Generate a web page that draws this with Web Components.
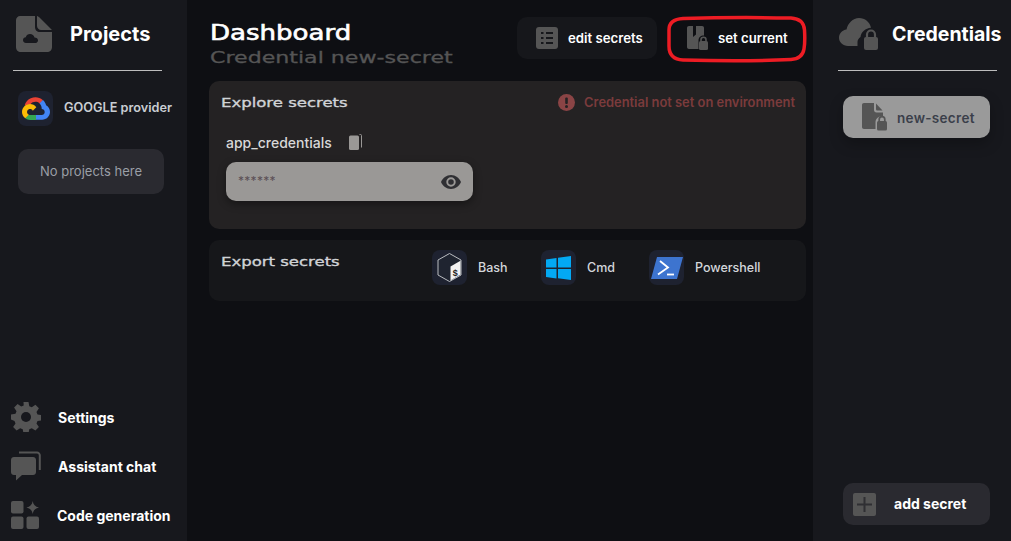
<!DOCTYPE html>
<html lang="en">
<head>
<meta charset="utf-8">
<title>Dashboard</title>
<style>
  html, body { margin: 0; height: 100%; background: #0e0f13; }
  body { font-family: Inter, "Liberation Sans", sans-serif; overflow: hidden; }
</style>
</head>
<body>
<app-shell>
  <projects-panel slot="left"></projects-panel>
  <dash-board slot="main"></dash-board>
  <credentials-panel slot="right"></credentials-panel>
</app-shell>

<script>
const icons = {
  project: `<svg viewBox="0 0 36 36" width="36" height="36"><path fill="#555" d="M4 0h15v11c0 3 2 5 5 5h12v15c0 3-2 5-5 5H5c-3 0-5-2-5-5V4c0-2 2-4 4-4z"/><path fill="#555" d="M21 0c1 0 2 1 3 2l10 10c1 1 2 2 2 2H25c-2 0-4-2-4-4z"/><path fill="#17181d" d="M10 27c-2 0-3-1.400-3-3 0-1.500 1.200-2.700 2.800-2.800.6-2 2.200-3.200 4.200-3.200 2.200 0 4 1.400 4.500 3.400 2 0 3.500 1.300 3.500 3 0 1.500-1.300 2.600-3 2.600z"/></svg>`,
  gear: `<svg viewBox="0 0 30 30" width="30" height="30"><path fill="#555" d="M12.500 0h5l.8 4.200 2.500 1 3.600-2.400 3.500 3.500-2.400 3.600 1 2.500 4.500.8v5l-4.500.8-1 2.500 2.400 3.600-3.500 3.500-3.600-2.400-2.500 1-.8 4.300h-5l-.8-4.300-2.500-1-3.600 2.400-3.500-3.500 2.400-3.600-1-2.500L0 17.500v-5l4.500-.8 1-2.500-2.400-3.600 3.500-3.500 3.600 2.400 2.500-1z"/><circle cx="15" cy="15" r="5" fill="#17181d"/></svg>`,
  chat: `<svg viewBox="0 0 30 30" width="30" height="30"><path fill="#555" d="M3 6h19c1.700 0 3 1.300 3 3v12c0 1.700-1.300 3-3 3H11l-6 5.500V24H3c-1.700 0-3-1.300-3-3V9c0-1.700 1.300-3 3-3z"/><path fill="none" stroke="#555" stroke-width="2" d="M8 1.500h18c1.500 0 2.800 1.300 2.800 2.800V19"/></svg>`,
  apps: `<svg viewBox="0 0 29 29" width="29" height="29"><rect x="0" y="0" width="12.500" height="12.500" rx="2" fill="#555"/><rect x="0" y="15.500" width="12.500" height="12.500" rx="2" fill="#555"/><rect x="15.500" y="15.500" width="12.500" height="12.500" rx="2" fill="#555"/><path fill="#555" d="M21.700 0c.5 3.600 2.500 5.700 6.300 6.500-3.800.8-5.800 2.900-6.300 6.500-.5-3.600-2.500-5.700-6.300-6.500 3.800-.8 5.800-2.900 6.300-6.500z"/></svg>`,
  list: `<svg viewBox="0 0 22 22" width="22" height="22"><rect width="22" height="22" rx="3" fill="#555"/><path stroke="#16171b" stroke-width="2" d="M5 6h2.500M10 6h7M5 11h2.500M10 11h7M5 16h2.500M10 16h7"/></svg>`,
  bookmarkLock: `<svg viewBox="0 0 21 24" width="21" height="24"><path fill="#555" d="M2 0h4v11l3-2.500V0h6c1.300 0 2 .8 2 2v7.500c-3.500 0-5.500 2-5.500 5V23H2c-1.200 0-2-.8-2-2V2C0 .8.800 0 2 0z"/><rect x="12" y="15" width="9" height="9" rx="1.500" fill="#555"/><path fill="none" stroke="#555" stroke-width="1.600" d="M14 15.500v-1.800a2.500 2.500 0 0 1 5 0v1.800"/></svg>`,
  cloudLock: `<svg viewBox="0 0 40 33" width="40" height="33"><path fill="#555" d="M9 28c-5 0-9-3.600-9-8.200 0-4.300 3.200-7.700 7.500-8.300C8.800 5.300 13.800 0 20 0c6 0 10.800 4 12 9.700-5.500.5-10 4.300-10.500 9.300-1.800 1-3 3-3 5v4z"/><rect x="25" y="19" width="14" height="13" rx="2" fill="#555"/><path fill="none" stroke="#555" stroke-width="2.200" d="M28 20v-3.500a4 4 0 0 1 8 0V20"/></svg>`,
  fileLock: `<svg viewBox="0 0 25 28" width="25" height="28"><path fill="#555" d="M2 0h10v7c0 1.500 1 2.500 2.500 2.500H21v3.500c-4.500 0-7.500 2.500-7.500 6.500V26H2c-1.200 0-2-.8-2-2V2C0 .8.800 0 2 0z"/><path fill="#555" d="M14 .5l6.500 7h-5c-1 0-1.500-.5-1.500-1.500z"/><rect x="15" y="18" width="10" height="9.500" rx="1.500" fill="#555"/><path fill="none" stroke="#555" stroke-width="1.700" d="M17.200 18.500v-2a2.800 2.800 0 0 1 5.600 0v2"/></svg>`,
  google: `<svg viewBox="0 0 28 23" width="28" height="23"><path fill="#ea4335" d="M18 6.500l2.500-2.500.2-1.100C16.200-1 9-.5 5 4c-1.100 1.300-1.900 2.800-2.400 4.400l.9-.1 4.700-.8.400-.4C10.600 4.400 14.800 4 17.500 6.200z"/><path fill="#4285f4" d="M24.100 8.300c-.5-2-1.600-3.800-3.200-5.200l-3.400 3.400c1.400 1.200 2.200 2.900 2.200 4.800v.6c1.700 0 3 1.300 3 3s-1.300 3-3 3H14l-.6.600v3.600l.6.600h6c4.300.1 7.900-3.300 8-7.700 0-2.600-1.300-5.100-3.900-6.700z"/><path fill="#34a853" d="M8 22.900h6v-4.900H8c-.4 0-.9-.1-1.300-.3l-.8.3-2.400 2.400-.2.800C4.600 22.200 6.300 22.900 8 22.900z"/><path fill="#fbbc05" d="M8 7.100C3.700 7.100.1 10.700 0 15c0 2.500 1.200 4.900 3.300 6.200l3.500-3.500c-1.500-.7-2.200-2.500-1.500-4s2.500-2.200 4-1.500c.7.300 1.200.8 1.500 1.500l3.500-3.500C12.800 8.200 10.500 7.100 8 7.100z"/></svg>`,
  bash: `<svg viewBox="0 0 35 35" width="35" height="35"><path fill="#1f2430" stroke="#b9bcc0" stroke-width="1" d="M17.500 3.500 29 10v15l-11.500 6.500L6 25V10z"/><path fill="#f2f2f2" d="M18.500 16.500 28.500 10.800v13.800L18.500 30.500z"/><text x="20.500" y="26" font-family="Liberation Mono, monospace" font-size="9" font-weight="700" fill="#222">$</text></svg>`,
  win: `<svg viewBox="0 0 25 24" width="25" height="24"><path fill="#03a9f4" d="M0 3.500 10.500 2v9.500H0zM12 1.800 25 0v11.500H12zM0 13h10.500v9.500L0 21zM12 13h13v11l-13-1.800z"/></svg>`,
  ps: `<svg viewBox="0 0 32 22" width="32" height="22"><path fill="#3d74cf" d="M6 0h26l-6 22H0z"/><path fill="none" stroke="#fff" stroke-width="1.800" d="M9 4l8 6.500-10 7"/><path stroke="#fff" stroke-width="1.800" d="M16 17.500h7"/></svg>`
};

// left column
class ProjectsPanel extends HTMLElement {
  constructor() {
    super();
    this.shadowDOM = this.attachShadow({ mode: 'open' });
  }

  connectedCallback() {
    this.shadowDOM.innerHTML = `
      <style>
        :host { display: flex; flex-direction: column; height: 100%; box-sizing: border-box; background: #17181d; padding: 16px 0 11px; font-family: Inter, sans-serif; }
        .head { display: flex; align-items: center; height: 36px; padding-left: 16px; gap: 18px; }
        .head svg { display: block; flex: none; }
        h2 { margin: 0; font: 700 20px/36px Inter, sans-serif; color: #fff; }
        hr { margin: 18px 25px 0 13px; border: 0; height: 1px; background: #bdbdbd; }
        .provider { display: flex; align-items: center; gap: 11px; margin: 20px 0 0 18px; }
        .tile { width: 35px; height: 35px; border-radius: 8px; background: #1e2230; display: flex; align-items: center; justify-content: center; }
        .provider span { font-size: 12.7px; font-weight: 600; color: #c9cdd3; white-space: nowrap; padding-bottom: 2px; }
        .empty { margin: 23px 23px 0 18px; height: 45px; padding-bottom: 2px; box-sizing: border-box; border-radius: 10px; background: #2a2a30; color: #9a9fa6; font-size: 13px; display: flex; align-items: center; justify-content: center; }
        nav { margin-top: auto; display: flex; flex-direction: column; gap: 19px; padding-left: 11px; }
        a { display: flex; align-items: center; height: 30px; gap: 17px; color: #fff; font-size: 14px; font-weight: 700; white-space: nowrap; }
        a svg { display: block; flex: none; }
      </style>
      <div class="head">${icons.project}<h2>Projects</h2></div>
      <hr>
      <div class="provider"><div class="tile">${icons.google}</div><span>GOOGLE provider</span></div>
      <div class="empty">No projects here</div>
      <nav>
        <a>${icons.gear}<span>Settings</span></a>
        <a>${icons.chat}<span>Assistant chat</span></a>
        <a>${icons.apps}<span>Code generation</span></a>
      </nav>`;
  }
}

class SecretField extends HTMLElement {
  constructor() {
    super();
    this.shadowDOM = this.attachShadow({ mode: 'open' });
  }

  connectedCallback() {
    this.shadowDOM.innerHTML = `
      <style>
        :host { display: block; font-family: Inter, sans-serif; }
        .label { display: flex; align-items: center; gap: 17px; height: 20px; color: #d8d8d8; font-size: 14px; font-weight: 500; }
        .label svg { display: block; }
        .box { margin-top: 10px; width: 247px; height: 39px; border-radius: 10px; background: #9a9896; box-shadow: 0 3px 8px rgba(0,0,0,.4); display: flex; align-items: center; justify-content: space-between; padding: 0 12px 0 12px; box-sizing: border-box; }
        .box span { color: #5b4f55; font-size: 12px; letter-spacing: .3px; padding-bottom: 2px; }
        .box svg { display: block; }
      </style>
      <div class="label"><slot></slot>
        <svg width="13" height="16" viewBox="0 0 13 16"><rect x="0" y="1.500" width="10" height="14.500" rx="1.500" fill="#9a9896"/><path fill="none" stroke="#9a9896" d="M10.500 .5h1a1 1 0 0 1 1 1v12"/></svg>
      </div>
      <div class="box"><span>******</span>
        <svg width="20" height="14" viewBox="0 0 20 14"><path fill="#2f2f33" d="M10 0C5.500 0 1.700 2.900 0 7c1.700 4.100 5.500 7 10 7s8.300-2.900 10-7c-1.700-4.100-5.500-7-10-7zm0 11.700A4.700 4.700 0 1 1 10 2.300a4.700 4.700 0 0 1 0 9.400zM10 4.200a2.800 2.800 0 1 0 0 5.600 2.800 2.800 0 0 0 0-5.600z"/></svg>
      </div>`;
  }
}

class ExportItem extends HTMLElement {
  constructor() {
    super();
    this.shadowDOM = this.attachShadow({ mode: 'open' });
  }

  connectedCallback() {
    this.shadowDOM.innerHTML = `
      <style>
        :host { display: flex; align-items: center; gap: 11px; font-family: Inter, sans-serif; color: #d3d6da; font-size: 12.5px; font-weight: 500; }
        .tile { width: 35px; height: 35px; border-radius: 8px; background: #1e2230; display: flex; align-items: center; justify-content: center; }
        svg { display: block; }
      </style>
      <div class="tile">${icons[this.getAttribute('icon')]}</div><slot></slot>`;
  }
}

// middle column
class DashBoard extends HTMLElement {
  constructor() {
    super();
    this.shadowDOM = this.attachShadow({ mode: 'open' });
  }

  connectedCallback() {
    this.shadowDOM.innerHTML = `
      <style>
        :host { display: block; position: relative; height: 100%; padding: 17px 7px 0 22px; box-sizing: border-box; font-family: Inter, sans-serif; }
        .top { display: flex; justify-content: space-between; height: 42px; padding-left: 1px; }
        .wide { display: block; width: max-content; font-family: "DejaVu Sans", sans-serif; transform-origin: left center; white-space: nowrap; }
        h1 { margin: 3px 0 0; font-size: 20.5px; line-height: 26px; font-weight: 400; color: #fff; -webkit-text-stroke: .6px #fff; transform: scaleX(1.27); }
        .sub { margin-top: 2px; font-size: 16.5px; line-height: 20px; color: #555; -webkit-text-stroke: .3px #555; transform: scaleX(1.34); }
        .btns { display: flex; }
        button { all: unset; box-sizing: border-box; height: 42px; border-radius: 10px; display: flex; align-items: center; color: #fff; font: 600 13.2px Inter, sans-serif; }
        button svg { display: block; flex: none; }
        .edit { width: 140px; background: #16171b; padding-left: 19px; gap: 10px; }
        .set { width: 136px; padding-left: 17px; gap: 10px; margin-left: 13px; }
        .ring { position: absolute; left: 480px; top: 15px; pointer-events: none; }
        section { border-radius: 10px; }
        .explore { margin-top: 22px; height: 148px; background: #242223; padding: 12px 11px 0 12px; box-sizing: border-box; }
        .row { display: flex; justify-content: space-between; align-items: center; height: 18px; }
        h3 { margin: 0; font: 400 12.5px/18px "DejaVu Sans", sans-serif; color: #d0d3d6; -webkit-text-stroke: .35px #d0d3d6; transform: scaleX(1.32); }
        .row h3 { margin-top: 2px; }
        .warn { display: flex; align-items: center; gap: 9px; color: #7b3b3c; font-size: 12.9px; font-weight: 600; white-space: nowrap; }
        .warn svg { display: block; }
        secret-field { margin: 21px 0 0 5px; }
        .export { margin-top: 11px; height: 61px; background: #16171a; padding: 12px 12px 0 12px; box-sizing: border-box; display: flex; }
        .slot-title { flex: 0 0 211px; margin-top: 1px; }
        .items { display: flex; margin-top: -2px; height: 35px; }
        .items export-item:nth-child(1) { width: 109px; }
        .items export-item:nth-child(2) { width: 108px; }
      </style>
      <div class="top">
        <div><h1 class="wide">Dashboard</h1><div class="wide sub">Credential new-secret</div></div>
        <div class="btns">
          <button class="edit">${icons.list}<span>edit secrets</span></button>
          <button class="set">${icons.bookmarkLock}<span>set current</span></button>
        </div>
      </div>
      <svg class="ring" width="140" height="48" viewBox="0 0 140 48"><path fill="none" stroke="#ed1c24" stroke-width="3.500" d="M16 3.500C50 2.500 95 2.500 124 3c9 .5 13 5 13.500 12 .5 8 .5 13-.5 19-1 6-5 10-13 10.500-30 1.500-75 1.500-108 .5C6 44.500 2 39 2 31V15C2 8 7 4 16 3.500z"/></svg>
      <section class="explore">
        <div class="row">
          <h3 class="wide">Explore secrets</h3>
          <div class="warn"><svg width="17" height="17" viewBox="0 0 17 17"><circle cx="8.500" cy="8.500" r="8.500" fill="#8a4445"/><rect x="7.200" y="3.500" width="2.600" height="6.500" rx="1" fill="#242223"/><circle cx="8.500" cy="12.500" r="1.500" fill="#242223"/></svg><span>Credential not set on environment</span></div>
        </div>
        <secret-field>app_credentials</secret-field>
      </section>
      <section class="export">
        <div class="slot-title"><h3 class="wide">Export secrets</h3></div>
        <div class="items">
          <export-item icon="bash">Bash</export-item>
          <export-item icon="win">Cmd</export-item>
          <export-item icon="ps">Powershell</export-item>
        </div>
      </section>`;
  }
}

// right column
class CredentialsPanel extends HTMLElement {
  constructor() {
    super();
    this.shadowDOM = this.attachShadow({ mode: 'open' });
  }

  connectedCallback() {
    this.shadowDOM.innerHTML = `
      <style>
        :host { display: flex; flex-direction: column; height: 100%; box-sizing: border-box; background: #17181d; padding: 16px 0 16px; font-family: Inter, sans-serif; }
        .head { display: flex; align-items: center; height: 36px; padding-left: 26px; gap: 13px; }
        .head svg { display: block; flex: none; }
        h2 { margin: 0; font: 700 19.5px/36px Inter, sans-serif; color: #fff; white-space: nowrap; }
        hr { margin: 18px 14px 0 25px; border: 0; height: 1px; background: #bdbdbd; }
        .btn { margin-left: 30px; width: 147px; height: 42px; border-radius: 10px; display: flex; align-items: center; box-sizing: border-box; white-space: nowrap; }
        .btn svg { display: block; flex: none; }
        .cur { margin-top: 25px; background: #9a9a9a; color: #3a3f4a; font-size: 13.5px; letter-spacing: .3px; font-weight: 600; padding-left: 19px; gap: 10px; box-shadow: 0 6px 14px rgba(0,0,0,.25); }
        .cur span { padding-top: 2px; }
        .add { margin-top: auto; background: #2a2a30; color: #fff; font-size: 14px; font-weight: 700; padding-left: 10px; gap: 18px; }
        .add span { padding-bottom: 2px; }
        .plus { width: 23px; height: 23px; border-radius: 2px; background: #555; flex: none; display: flex; }
      </style>
      <div class="head">${icons.cloudLock}<h2>Credentials</h2></div>
      <hr>
      <div class="btn cur">${icons.fileLock}<span>new-secret</span></div>
      <div class="btn add"><div class="plus"><svg width="23" height="23" viewBox="0 0 23 23"><path stroke="#2f2f33" stroke-width="2" d="M11.500 4v15M4 11.500h15"/></svg></div><span>add secret</span></div>`;
  }
}

class AppShell extends HTMLElement {
  constructor() {
    super();
    this.shadowDOM = this.attachShadow({ mode: 'open' });
  }

  connectedCallback() {
    this.shadowDOM.innerHTML = `
      <style>
        :host { display: grid; grid-template-columns: 187px minmax(0, 1fr) 198px; height: 541px; width: 1011px; overflow: hidden; background: #0e0f13; }
      </style>
      <slot name="left"></slot><slot name="main"></slot><slot name="right"></slot>`;
  }
}

customElements.define('secret-field', SecretField);
customElements.define('export-item', ExportItem);
customElements.define('projects-panel', ProjectsPanel);
customElements.define('dash-board', DashBoard);
customElements.define('credentials-panel', CredentialsPanel);
customElements.define('app-shell', AppShell);
</script>
</body>
</html>
